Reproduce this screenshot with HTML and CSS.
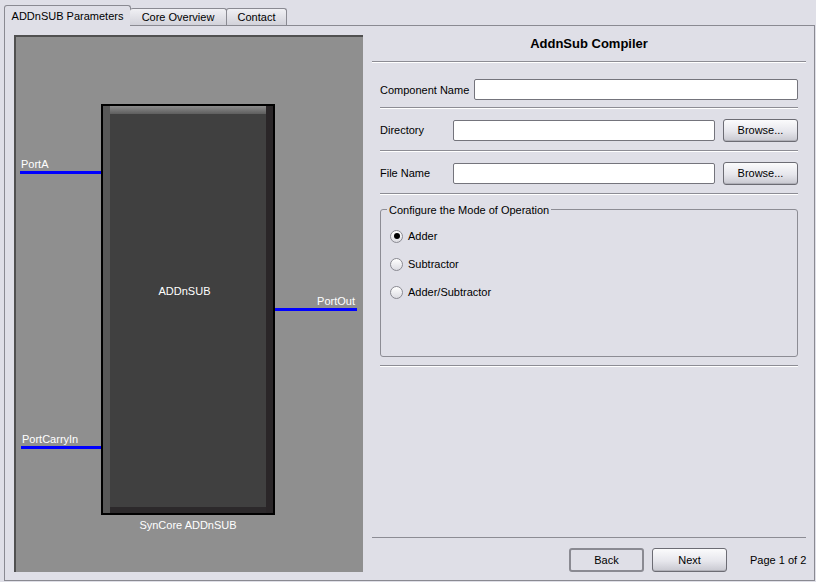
FILE: index.html
```html
<!DOCTYPE html>
<html lang="en">
<head>
<meta charset="utf-8">
<title>AddnSub Compiler</title>
<link rel="stylesheet" href="styles.css">
</head>
<body>
<div class="app">
  <div class="tabs">
    <div class="tab tab-active">ADDnSUB Parameters</div>
    <div class="tab tab-core">Core Overview</div>
    <div class="tab tab-contact">Contact</div>
  </div>
  <div class="panel">
    <div class="diagram">
      <div class="port port-a"><span class="port-label">PortA</span><span class="port-line"></span></div>
      <div class="port port-carry"><span class="port-label">PortCarryIn</span><span class="port-line"></span></div>
      <div class="port port-out"><span class="port-label">PortOut</span><span class="port-line"></span></div>
      <div class="component">
        <div class="block"><span class="block-label">ADDnSUB</span></div>
        <div class="caption">SynCore ADDnSUB</div>
      </div>
    </div>
    <div class="form">
      <div class="title">AddnSub Compiler</div>
      <div class="fields">
        <div class="row row-first">
          <label class="label label-wide">Component Name</label>
          <span class="input"></span>
        </div>
        <div class="row">
          <label class="label">Directory</label>
          <span class="input"></span>
          <span class="button">Browse...</span>
        </div>
        <div class="row">
          <label class="label">File Name</label>
          <span class="input"></span>
          <span class="button">Browse...</span>
        </div>
        <div class="group">
          <span class="legend">Configure the Mode of Operation</span>
          <div class="radio-row"><span class="radio radio-checked"></span><span>Adder</span></div>
          <div class="radio-row"><span class="radio"></span><span>Subtractor</span></div>
          <div class="radio-row"><span class="radio"></span><span>Adder/Subtractor</span></div>
        </div>
        <div class="sep"></div>
      </div>
      <div class="footer">
        <span class="button button-flat">Back</span>
        <span class="button">Next</span>
        <span class="page-info">Page 1 of 2</span>
      </div>
    </div>
  </div>
</div>
</body>
</html>
```
FILE: styles.css
```css
body {
  margin: 0;
  background: #dfdfe7;
  font-family: "Liberation Sans", Arial, sans-serif;
  font-size: 11px;
  color: #000;
}

.app {
  padding: 5px 0 0 4px;
  width: 811px;
}

/* Tabs */
.tabs {
  display: flex;
  align-items: flex-end;
  height: 20px;
  position: relative;
  z-index: 1;
}

.tab {
  box-sizing: border-box;
  height: 17px;
  line-height: 16px;
  border: 1px solid #8a8a92;
  border-bottom: none;
  border-radius: 3px 3px 0 0;
  background: linear-gradient(#f0f0f4, #d2d2da);
  text-align: center;
  white-space: nowrap;
}

.tab-active {
  width: 127px;
  height: 21px;
  line-height: 20px;
  margin-bottom: -1px;
  background: #dfdfe7;
}

.tab-core {
  width: 97px;
  margin-left: -1px;
  border-left: none;
}

.tab-contact {
  width: 61px;
  margin-left: -1px;
}

/* Panel */
.panel {
  box-sizing: border-box;
  height: 556px;
  border: 1px solid #8a8a92;
  display: flex;
  gap: 9px;
  padding: 9px 8px 8px 9px;
}

/* Diagram canvas */
.diagram {
  position: relative;
  box-sizing: border-box;
  width: 349px;
  flex: none;
  border-top: 2px solid #505050;
  border-left: 2px solid #505050;
  background: #8f8f8f;
  color: #fff;
}

.port {
  position: absolute;
  display: flex;
  flex-direction: column;
}

.port-label {
  line-height: 13px;
  white-space: nowrap;
  padding-left: 1px;
}

.port-line {
  height: 3px;
  background: #0000ff;
}

.port-a {
  left: 4px;
  top: 121px;
  width: 81px;
}

.port-carry {
  left: 5px;
  top: 396px;
  width: 80px;
}

.port-out {
  left: 259px;
  top: 258px;
  width: 82px;
  text-align: right;
}

.port-out .port-label {
  padding: 0 2px 0 0;
}

.component {
  position: absolute;
  left: 85px;
  top: 67px;
  width: 174px;
  display: flex;
  flex-direction: column;
}

.block {
  box-sizing: border-box;
  height: 411px;
  border: 2px solid #000;
  background: linear-gradient(#8c8c8c, #5e5e5e) top / 100% 8px no-repeat, #404040;
  box-shadow: inset 7px 0 0 #585858, inset -7px 0 0 #2a2628, inset 0 -6px 0 #2c292b;
  padding: 179px 7px 0 0;
  text-align: center;
}

.block-label {
  line-height: 13px;
}

.caption {
  margin-top: 4px;
  line-height: 13px;
  text-align: center;
}

/* Form */
.form {
  flex: 1;
  display: flex;
  flex-direction: column;
}

.title {
  height: 18px;
  line-height: 18px;
  padding-bottom: 8px;
  border-bottom: 1px solid #8c8c94;
  box-shadow: 0 1px 0 #fff;
  text-align: center;
  font-weight: bold;
  font-size: 13px;
}

.fields {
  padding: 0 8px;
  display: flex;
  flex-direction: column;
}

.row {
  display: flex;
  align-items: center;
  gap: 8px;
  height: 40px;
  padding-top: 2px;
  border-bottom: 1px solid #8c8c94;
  box-shadow: 0 1px 0 #fff;
}

.row-first {
  height: 35px;
  padding-top: 10px;
}

.label {
  width: 65px;
  flex: none;
  white-space: nowrap;
}

.label-wide {
  width: 86px;
}

.input {
  flex: 1;
  box-sizing: border-box;
  height: 21px;
  border: 1px solid #74747c;
  border-radius: 2px;
  background: #fff;
}

.button {
  box-sizing: border-box;
  width: 75px;
  height: 23px;
  flex: none;
  display: flex;
  align-items: center;
  justify-content: center;
  border: 1px solid #6c6c74;
  border-radius: 3px;
  background: linear-gradient(#fbfbfc, #e6e6ec 55%, #c8c8d0);
  box-shadow: inset 0 -1px 0 #b0b0b8;
}

.button-flat {
  background: #dfdfe7;
  border: 2px solid #8a8a92;
  box-shadow: none;
}

/* Group box */
.group {
  position: relative;
  box-sizing: border-box;
  height: 148px;
  margin-top: 15px;
  padding: 12px 9px 0;
  border: 1px solid #8c8c94;
  border-radius: 3px;
}

.legend {
  position: absolute;
  top: -6px;
  left: 6px;
  padding: 0 2px;
  line-height: 13px;
  background: #dfdfe7;
  white-space: nowrap;
}

.radio-row {
  height: 28px;
  display: flex;
  align-items: center;
  gap: 5px;
}

.radio {
  box-sizing: border-box;
  width: 13px;
  height: 13px;
  border: 1px solid #8a8a92;
  border-radius: 50%;
  background: linear-gradient(#ffffff, #dcdce2);
  display: flex;
  align-items: center;
  justify-content: center;
}

.radio-checked::after {
  content: "";
  width: 6px;
  height: 6px;
  border-radius: 50%;
  background: #000;
}

.sep {
  margin-top: 8px;
  border-bottom: 1px solid #8c8c94;
  box-shadow: 0 1px 0 #fff;
}

/* Footer */
.footer {
  margin-top: auto;
  height: 24px;
  padding-top: 10px;
  border-top: 1px solid #8c8c94;
  display: flex;
  align-items: center;
  justify-content: flex-end;
  gap: 8px;
}

.footer .button {
  height: 24px;
}

.page-info {
  width: 56px;
  margin-left: 15px;
  text-align: right;
  white-space: nowrap;
}
```
